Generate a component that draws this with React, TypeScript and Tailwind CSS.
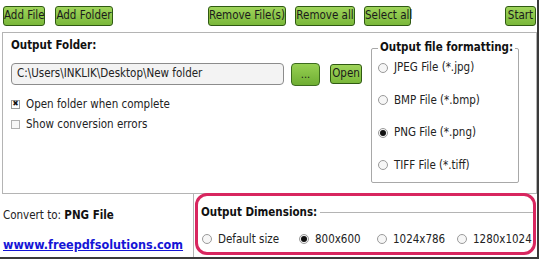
const font = "font-['DejaVu_Sans_Condensed','DejaVu_Sans',sans-serif] font-stretch-condensed";

function GreenButton({ label, className = "" }: { label: string; className?: string }) {
  return (
    <button
      type="button"
      className={`h-[20px] whitespace-nowrap rounded-[3px] border border-[#2f5a12] bg-gradient-to-b from-[#9fd45a] to-[#7ab83a] px-0 text-[11.5px] leading-none text-[#1a1a1a] ${className}`}
    >
      {label}
    </button>
  );
}

function Radio({ checked, label, className = "" }: { checked?: boolean; label: string; className?: string }) {
  return (
    <div className={`flex items-center gap-[6px] ${className}`}>
      <span className="flex h-[10px] w-[10px] items-center justify-center rounded-full border border-[#9a9a9a] bg-[#f6f6f6]">
        {checked && <span className="h-[6px] w-[6px] rounded-full bg-[#111]" />}
      </span>
      <span className="whitespace-nowrap text-[11.5px] leading-none text-[#222]">{label}</span>
    </div>
  );
}

export default function App() {
  return (
    <div className={`relative h-[262px] w-[542px] overflow-hidden bg-white ${font}`}>
      <div className="h-[259px] w-[539px] border-b-[2px] border-r-[2px] border-[#3a3a3a] bg-white">
        {/* toolbar */}
        <div className="flex h-[32px] items-start pt-[6px]">
          <GreenButton label="Add File" className="ml-[3px] w-[42px]" />
          <GreenButton label="Add Folder" className="ml-[10px] w-[58px]" />
          <GreenButton label="Remove File(s)" className="ml-[95px] w-[78px]" />
          <GreenButton label="Remove all" className="ml-[9px] w-[60px]" />
          <GreenButton label="Select all" className="ml-[9px] w-[47px]" />
          <GreenButton label="Start" className="ml-[94px] w-[31px]" />
        </div>

        {/* main panel */}
        <div className="ml-[2px] flex h-[162px] w-[535px] border border-[#b4b4b4]">
          <div className="flex w-[368px] flex-col pl-[8px] pt-[7px]">
            <div className="whitespace-nowrap text-[11.5px] font-bold leading-none text-[#111]">Output Folder:</div>
            <div className="mt-[11px] flex items-center">
              <div className="flex h-[22px] w-[273px] items-center whitespace-nowrap rounded-[4px] border border-[#8c8c8c] bg-[#f3f3f3] pl-[5px] text-[11.5px] text-[#222]">
                C:\Users\INKLIK\Desktop\New folder
              </div>
              <button
                type="button"
                className="ml-[7px] h-[23px] w-[29px] rounded-[4px] border border-[#3c6b1e] bg-gradient-to-b from-[#97d052] to-[#6fae33] text-[11px] leading-none text-[#1a1a1a]"
              >
                ...
              </button>
              <GreenButton label="Open" className="ml-[10px] h-[19px] w-[32px]" />
            </div>
            <div className="mt-[13px] flex items-center gap-[6px]">
              <span className="flex h-[9px] w-[9px] items-center justify-center border border-[#9a9a9a] bg-white text-[8px] leading-none text-[#111]">
                ✖
              </span>
              <span className="whitespace-nowrap text-[11.5px] leading-none text-[#222]">Open folder when complete</span>
            </div>
            <div className="mt-[9px] flex items-center gap-[6px]">
              <span className="h-[9px] w-[9px] border border-[#b0b0b0] bg-[#f7f7f7]" />
              <span className="whitespace-nowrap text-[11.5px] leading-none text-[#222]">Show conversion errors</span>
            </div>
          </div>

          <div className="relative mt-[15px] h-[135px] w-[148px] rounded-[2px] border border-[#a8a8a8]">
            <div className="absolute -top-[7px] left-[6px] whitespace-nowrap bg-white px-[2px] text-[11.5px] font-bold leading-none text-[#111]">
              Output file formatting:
            </div>
            <div className="flex flex-col gap-[21px] pl-[6px] pt-[13px]">
              <Radio label="JPEG File (*.jpg)" />
              <Radio label="BMP File (*.bmp)" />
              <Radio checked label="PNG File (*.png)" />
              <Radio label="TIFF File (*.tiff)" />
            </div>
          </div>
        </div>

        {/* bottom */}
        <div className="flex h-[63px]">
          <div className="flex w-[194px] flex-col border-r border-[#b4b4b4] pl-[3px] pt-[16px]">
            <div className="whitespace-nowrap text-[11.5px] leading-none text-[#222]">
              Convert to: <span className="font-bold text-[#111]">PNG File</span>
            </div>
            <a className="mt-[17px] whitespace-nowrap text-[12.5px] font-bold leading-none text-[#1515d6] underline" href="#">
              wwww.freepdfsolutions.com
            </a>
          </div>
          <div className="relative -mt-[1px] ml-[1px] h-[62px] w-[341px] rounded-[12px] border-[3px] border-[#d8265f]">
            <div className="mt-[11px] flex items-center">
              <span className="ml-[3px] whitespace-nowrap text-[11.5px] font-bold leading-none text-[#111]">Output Dimensions:</span>
              <span className="ml-[3px] h-px flex-1 bg-[#b4b4b4]" />
            </div>
            <div className="mt-[15px] flex items-center pl-[4px]">
              <Radio label="Default size" className="w-[97px]" />
              <Radio checked label="800x600" className="w-[78px]" />
              <Radio label="1024x786" className="w-[80px]" />
              <Radio label="1280x1024" />
            </div>
          </div>
        </div>
      </div>
    </div>
  );
}
